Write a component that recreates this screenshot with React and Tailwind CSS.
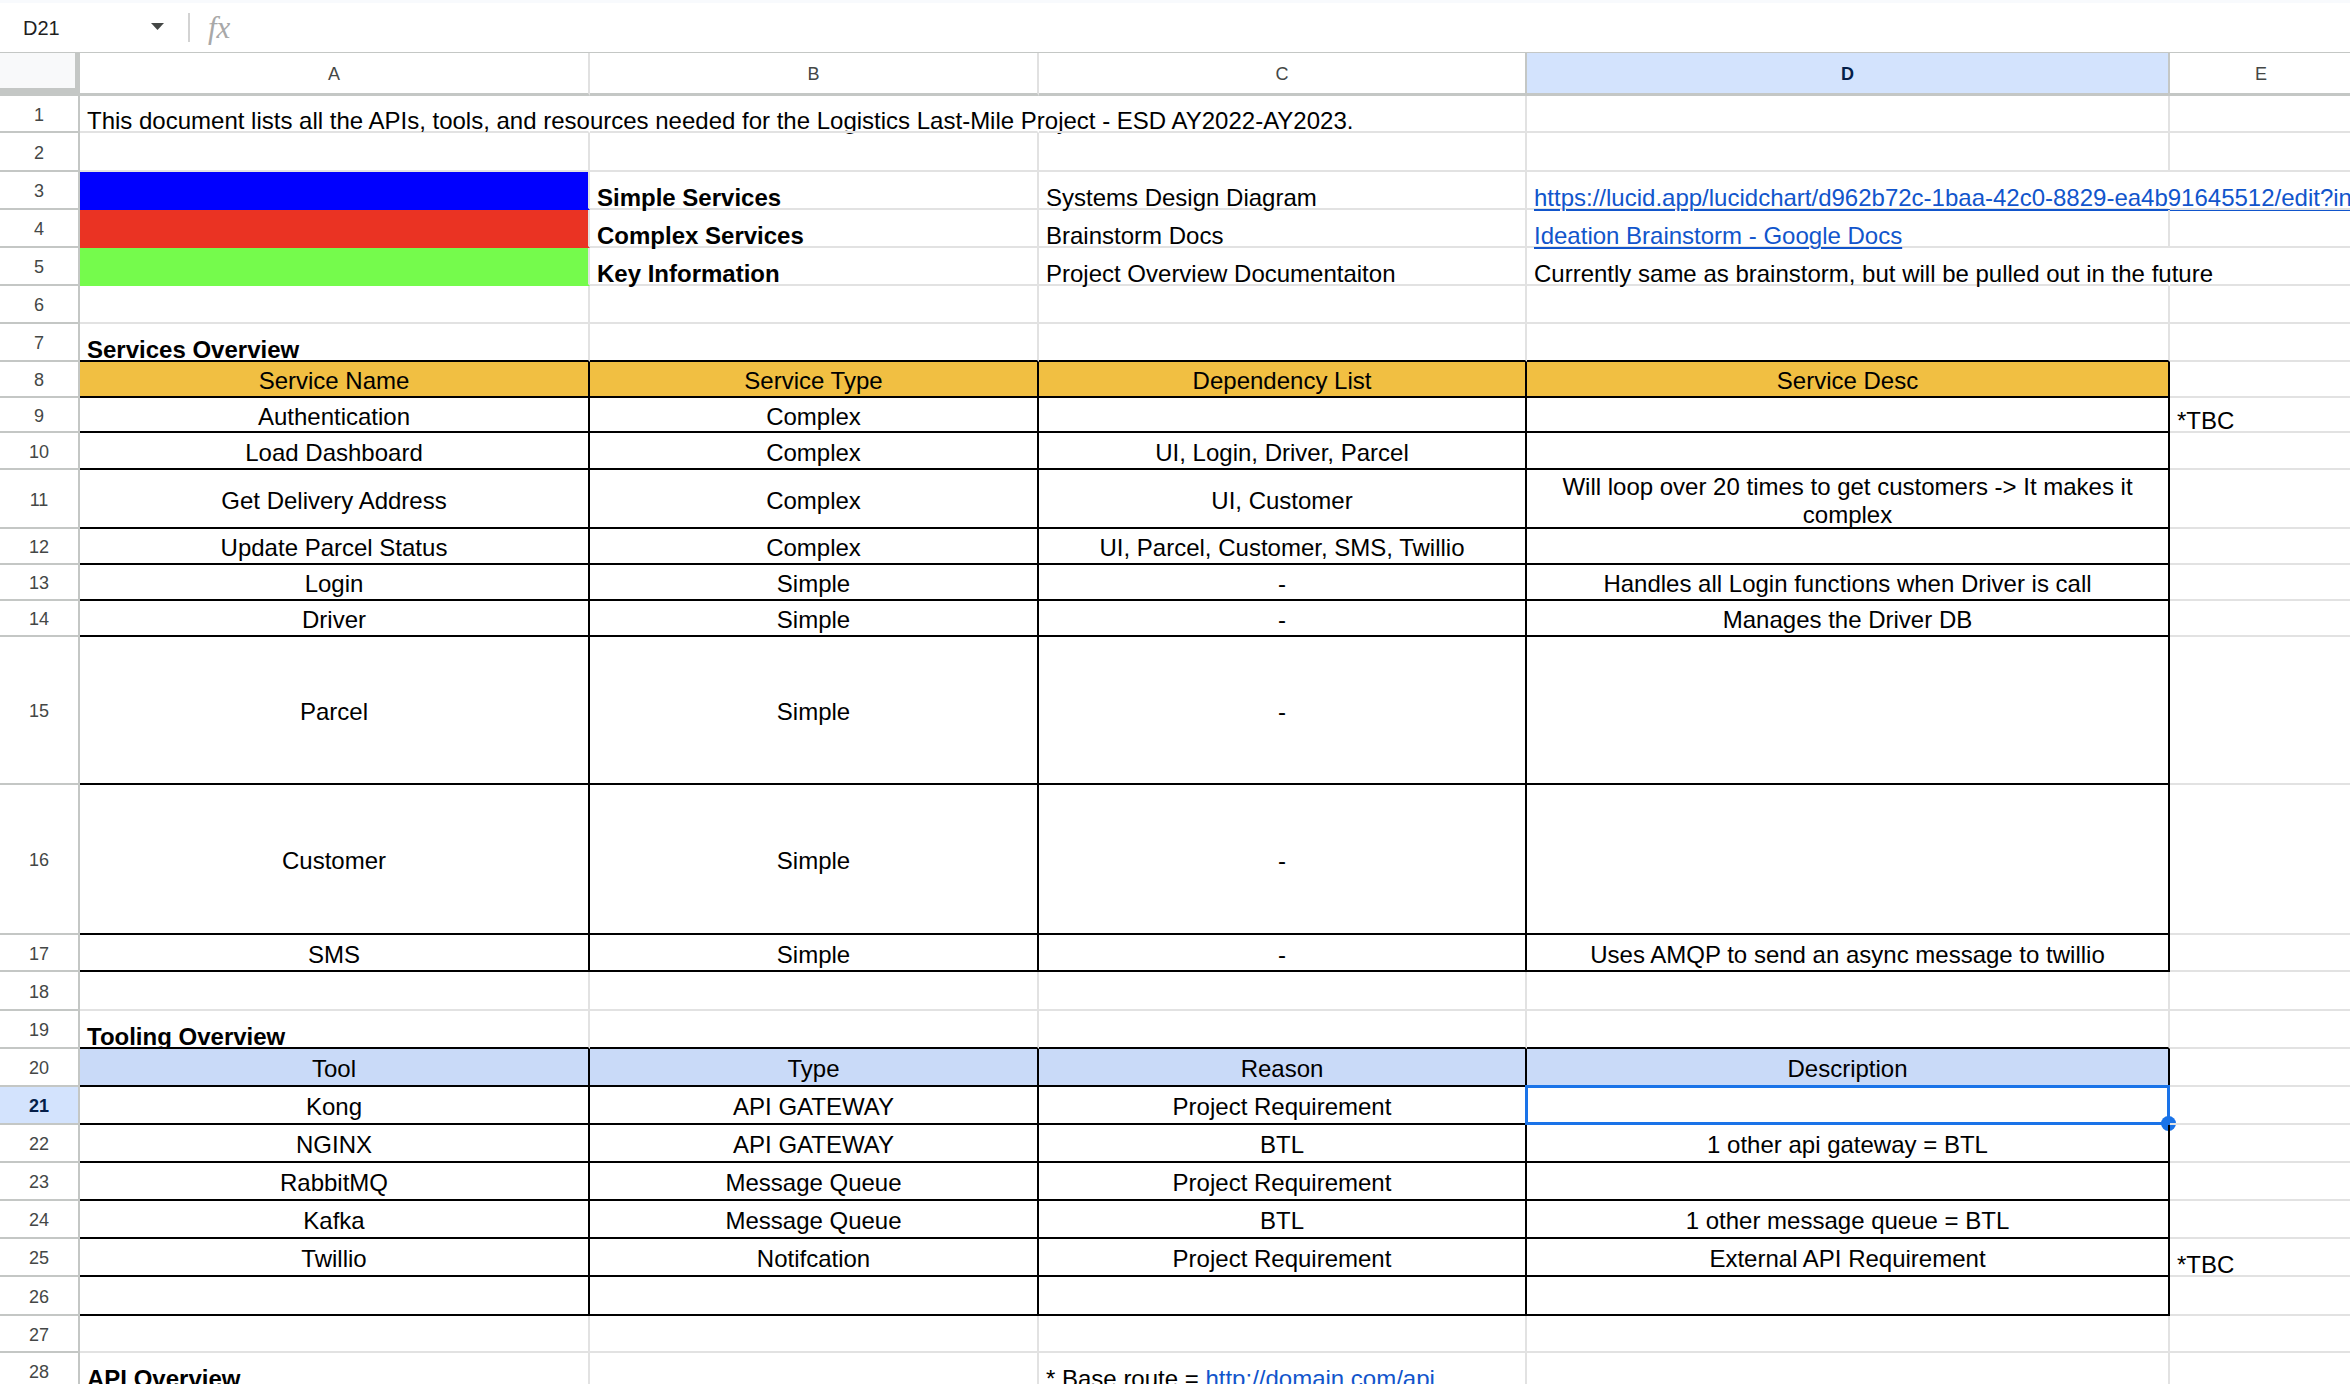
import React from "react";

const WIDTHS = ["w-[510px]", "w-[449px]", "w-[488px]", "w-[643px]", "w-[184px]"];

const FILLS = {
  blue: "bg-[#0000ff] border-b-[#0000ff]",
  red: "bg-[#ea3323] border-b-[#ea3323]",
  green: "bg-[#75fb4c] border-b-[#75fb4c]",
};

const ROWS = [
  { n: 1, h: "h-[37px]", c: [{ t: "This document lists all the APIs, tools, and resources needed for the Logistics Last-Mile Project - ESD AY2022-AY2023.", nr: true }, { nr: true }, {}, {}, {}] },
  { n: 2, h: "h-[39px]", c: [] },
  { n: 3, h: "h-[38px]", c: [{ fill: "blue" }, { t: "Simple Services", b: true }, { t: "Systems Design Diagram" }, { t: "https://lucid.app/lucidchart/d962b72c-1baa-42c0-8829-ea4b91645512/edit?invitationId=inv_4e1b", link: true, nr: true }, {}] },
  { n: 4, h: "h-[38px]", c: [{ fill: "red" }, { t: "Complex Services", b: true }, { t: "Brainstorm Docs" }, { t: "Ideation Brainstorm - Google Docs", link: true }, {}] },
  { n: 5, h: "h-[38px]", c: [{ fill: "green" }, { t: "Key Information", b: true }, { t: "Project Overview Documentaiton" }, { t: "Currently same as brainstorm, but will be pulled out in the future", nr: true }, {}] },
  { n: 6, h: "h-[38px]", c: [] },
  { n: 7, h: "h-[38px]", top: true, c: [{ t: "Services Overview", b: true }] },
  { n: 8, h: "h-[36px]", tbl: "orange", c: [{ t: "Service Name" }, { t: "Service Type" }, { t: "Dependency List" }, { t: "Service Desc" }] },
  { n: 9, h: "h-[35px]", tbl: true, c: [{ t: "Authentication" }, { t: "Complex" }, {}, {}, { t: "*TBC" }] },
  { n: 10, h: "h-[37px]", tbl: true, c: [{ t: "Load Dashboard" }, { t: "Complex" }, { t: "UI, Login, Driver, Parcel" }, {}] },
  { n: 11, h: "h-[59px]", tbl: true, c: [{ t: "Get Delivery Address" }, { t: "Complex" }, { t: "UI, Customer" }, { lines: ["Will loop over 20 times to get customers -> It makes it", "complex"] }] },
  { n: 12, h: "h-[36px]", tbl: true, c: [{ t: "Update Parcel Status" }, { t: "Complex" }, { t: "UI, Parcel, Customer, SMS, Twillio" }, {}] },
  { n: 13, h: "h-[36px]", tbl: true, c: [{ t: "Login" }, { t: "Simple" }, { t: "-" }, { t: "Handles all Login functions when Driver is call" }] },
  { n: 14, h: "h-[36px]", tbl: true, c: [{ t: "Driver" }, { t: "Simple" }, { t: "-" }, { t: "Manages the Driver DB" }] },
  { n: 15, h: "h-[148px]", tbl: true, c: [{ t: "Parcel" }, { t: "Simple" }, { t: "-" }, {}] },
  { n: 16, h: "h-[150px]", tbl: true, c: [{ t: "Customer" }, { t: "Simple" }, { t: "-" }, {}] },
  { n: 17, h: "h-[37px]", tbl: true, c: [{ t: "SMS" }, { t: "Simple" }, { t: "-" }, { t: "Uses AMQP to send an async message to twillio" }] },
  { n: 18, h: "h-[39px]", c: [] },
  { n: 19, h: "h-[38px]", top: true, c: [{ t: "Tooling Overview", b: true }] },
  { n: 20, h: "h-[38px]", tbl: "blue", c: [{ t: "Tool" }, { t: "Type" }, { t: "Reason" }, { t: "Description" }] },
  { n: 21, h: "h-[38px]", tbl: true, sel: true, c: [{ t: "Kong" }, { t: "API GATEWAY" }, { t: "Project Requirement" }, { selected: true }] },
  { n: 22, h: "h-[38px]", tbl: true, c: [{ t: "NGINX" }, { t: "API GATEWAY" }, { t: "BTL" }, { t: "1 other api gateway = BTL" }] },
  { n: 23, h: "h-[38px]", tbl: true, c: [{ t: "RabbitMQ" }, { t: "Message Queue" }, { t: "Project Requirement" }, {}] },
  { n: 24, h: "h-[38px]", tbl: true, c: [{ t: "Kafka" }, { t: "Message Queue" }, { t: "BTL" }, { t: "1 other message queue = BTL" }] },
  { n: 25, h: "h-[38px]", tbl: true, c: [{ t: "Twillio" }, { t: "Notifcation" }, { t: "Project Requirement" }, { t: "External API Requirement" }, { t: "*TBC" }] },
  { n: 26, h: "h-[39px]", tbl: true, c: [{}, {}, {}, {}] },
  { n: 27, h: "h-[37px]", c: [] },
  { n: 28, h: "h-[38px]", c: [{ t: "API Overview", b: true }, {}, { base: true }] },
];

function Cell({ col, d, row }) {
  const inTable = row.tbl && col < 4;
  let cls = "relative shrink-0 flex border-r-2 border-b-2 whitespace-nowrap px-[7px] text-[24px] " + WIDTHS[col] + " ";
  if (inTable) {
    cls += "border-r-black border-b-black items-center justify-center text-center leading-[28px] pt-[4px]";
    if (row.tbl === "orange") cls += " bg-[#f1bf42]";
    if (row.tbl === "blue") cls += " bg-[#c9daf8]";
  } else {
    cls += "items-end leading-[20px] ";
    cls += d.nr ? "border-r-transparent " : "border-r-[#e2e2e2] ";
    if (d.fill) cls += FILLS[d.fill];
    else cls += row.top && col < 4 ? "border-b-black" : "border-b-[#e2e2e2]";
  }
  return (
    <div className={cls}>
      {d.t && (
        <span className={(d.b ? "font-bold " : "") + (d.link ? "text-[#1155cc] underline underline-offset-[3px] decoration-[2px]" : "text-black")}>
          {d.t}
        </span>
      )}
      {d.lines && (
        <span className="whitespace-normal">
          {d.lines[0]}
          <br />
          {d.lines[1]}
        </span>
      )}
      {d.base && (
        <span>
          {"* Base route = "}
          <span className="text-[#1155cc] underline underline-offset-[3px] decoration-[2px]">http://domain.com/api</span>
        </span>
      )}
      {d.selected && (
        <div className="pointer-events-none absolute -top-[2px] -left-[2px] -right-[2px] -bottom-[2px] border-[3px] border-[#1a73e8]">
          <div className="absolute -right-[9px] -bottom-[9px] w-[15px] h-[15px] rounded-full bg-[#1a73e8]" />
        </div>
      )}
    </div>
  );
}

function Row({ row }) {
  const cells = [0, 1, 2, 3, 4].map((i) => row.c[i] || {});
  return (
    <div className={"flex " + row.h}>
      <div
        className={
          "w-[80px] shrink-0 flex items-center justify-center pt-[3px] border-r-2 border-b-2 border-[#c4c7c5] text-[18px] " +
          (row.sel ? "bg-[#d3e3fd] font-bold text-[#041e49]" : "text-[#444746]")
        }
      >
        {row.n}
      </div>
      {cells.map((d, i) => (
        <Cell key={i} col={i} d={d} row={row} />
      ))}
    </div>
  );
}

function FormulaBar() {
  return (
    <div className="h-[53px] flex items-center border-b border-[#c4c7c5] border-t-[3px] border-t-[#f8fafd] bg-white">
      <div className="pl-[23px] w-[151px] text-[20px] text-[#1f1f1f]">D21</div>
      <svg width="13" height="7" viewBox="0 0 13 7" className="mt-[-2px]">
        <path d="M0 0 L13 0 L6.5 7 Z" fill="#444746" />
      </svg>
      <div className="ml-[24px] w-[2px] h-[29px] bg-[#d3d3d3]" />
      <span className="ml-[18px] italic font-['Liberation_Serif',serif] text-[31px] leading-none text-[#a8a8a8]">fx</span>
    </div>
  );
}

function ColumnHeader() {
  const letters = ["A", "B", "C", "D", "E"];
  return (
    <div className="flex h-[43px]">
      <div className="w-[80px] shrink-0 bg-[#f8f9fa] border-r-[5px] border-b-[8px] border-[#c4c7c5]" />
      {letters.map((l, i) => (
        <div
          key={l}
          className={
            "shrink-0 flex items-center justify-center pt-[3px] border-r-2 border-b-[3px] border-b-[#c4c7c5] text-[18px] " +
            WIDTHS[i] +
            (l === "D"
              ? " bg-[#d3e3fd] font-bold text-[#041e49] border-r-[#c4c7c5]"
              : l === "C"
              ? " text-[#444746] border-r-[#c4c7c5]"
              : " text-[#444746] border-r-[#e1e1e1]")
          }
        >
          {l}
        </div>
      ))}
    </div>
  );
}

export default function App() {
  return (
    <div className="w-[2350px] h-[1384px] overflow-hidden bg-white font-['Liberation_Sans',Arial,sans-serif] text-black">
      <FormulaBar />
      <ColumnHeader />
      {ROWS.map((r) => (
        <Row key={r.n} row={r} />
      ))}
    </div>
  );
}
